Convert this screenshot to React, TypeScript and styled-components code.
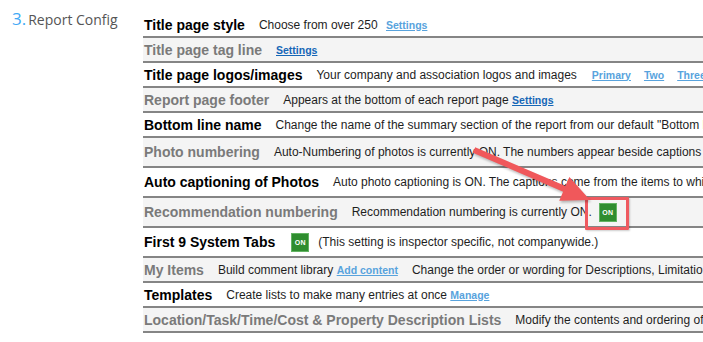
import React from 'react';
import styled, { createGlobalStyle } from 'styled-components';

const GlobalStyle = createGlobalStyle`
  html, body {
    margin: 0;
    padding: 0;
    background: #ffffff;
  }
  body {
    overflow: hidden;
  }
`;

const Page = styled.div`
  position: relative;
  width: 703px;
  height: 342px;
  overflow: hidden;
  display: flex;
  background: #fff;
`;

const Side = styled.div`
  width: 143px;
  flex-shrink: 0;
  padding: 7px 0 0 12px;
  box-sizing: border-box;
  font-family: 'Open Sans', 'Liberation Sans', sans-serif;
  white-space: nowrap;
`;

const StepNo = styled.span`
  color: #3fa9f5;
  font-size: 17px;
  margin-right: 2px;
`;

const StepName = styled.span`
  color: #555;
  font-size: 14px;
`;

const Table = styled.div`
  margin-top: 13px;
  flex: 1;
  min-width: 900px;
`;

const Row = styled.div<{ $shade?: boolean; $tall?: boolean }>`
  display: flex;
  align-items: center;
  gap: 14px;
  height: ${(p) => (p.$tall ? 28 : 23)}px;
  padding-left: 1px;
  border-bottom: 2px solid #858585;
  background: ${(p) => (p.$shade ? '#f4f4f4' : '#ffffff')};
  font-family: 'Liberation Sans', Arial, sans-serif;
  white-space: nowrap;
`;

const Label = styled.span<{ $shade?: boolean }>`
  font-size: 14px;
  font-weight: bold;
  color: ${(p) => (p.$shade ? '#7a7a7a' : '#000')};
`;

const Desc = styled.span`
  font-size: 12px;
  color: #1e1e1e;
`;

const Link = styled.a<{ $dark?: boolean; $gap?: number }>`
  font-size: 10.5px;
  font-weight: bold;
  text-decoration: underline;
  color: ${(p) => (p.$dark ? '#1667b7' : '#58a3dd')};
  margin-left: ${(p) => p.$gap ?? 0}px;
  cursor: pointer;
`;

const Links = styled.span`
  display: inline-flex;
  gap: 13px;
  margin-left: 1px;
`;

const Badge = styled.span<{ $marked?: boolean; $gap?: number }>`
  position: relative;
  display: inline-flex;
  align-items: center;
  justify-content: center;
  width: 18px;
  height: 19px;
  box-sizing: border-box;
  margin-left: ${(p) => p.$gap ?? 0}px;
  vertical-align: middle;
  background: #2f8d2f;
  border: 1px solid #63b463;
  color: #fff;
  font-family: 'Liberation Sans', Arial, sans-serif;
  font-size: 7px;
  font-weight: bold;
  letter-spacing: 0.3px;

  ${(p) =>
    p.$marked &&
    `
    &::after {
      content: '';
      position: absolute;
      top: -7px;
      left: -15px;
      right: -13px;
      bottom: -9px;
      border: 3px solid #ef5a60;
      border-radius: 1px;
      box-shadow: 1px 1px 2px rgba(0, 0, 0, 0.2);
    }
  `}
`;

const Arrow = styled.svg`
  position: absolute;
  left: 0;
  top: 0;
  pointer-events: none;
  filter: drop-shadow(1px 2px 1px rgba(0, 0, 0, 0.25));
`;

type Item = {
  label: string;
  tall?: boolean;
  body: React.ReactNode;
};

const items: Item[] = [
  {
    label: 'Title page style',
    body: (
      <Desc>
        Choose from over 250 <Link $gap={5}>Settings</Link>
      </Desc>
    ),
  },
  {
    label: 'Title page tag line',
    body: <Link $dark>Settings</Link>,
  },
  {
    label: 'Title page logos/images',
    body: (
      <>
        <Desc>Your company and association logos and images</Desc>
        <Links>
          <Link>Primary</Link>
          <Link>Two</Link>
          <Link>Three</Link>
        </Links>
      </>
    ),
  },
  {
    label: 'Report page footer',
    body: (
      <Desc>
        Appears at the bottom of each report page <Link $dark>Settings</Link>
      </Desc>
    ),
  },
  {
    label: 'Bottom line name',
    body: (
      <Desc>
        Change the name of the summary section of the report from our default "Bottom line" to whatever you like
      </Desc>
    ),
  },
  {
    label: 'Photo numbering',
    tall: true,
    body: (
      <Desc>
        Auto-Numbering of photos is currently ON. The numbers appear beside captions in the report
      </Desc>
    ),
  },
  {
    label: 'Auto captioning of Photos',
    tall: true,
    body: (
      <Desc>
        Auto photo captioning is ON. The captions come from the items to which the photos are attached
      </Desc>
    ),
  },
  {
    label: 'Recommendation numbering',
    tall: true,
    body: (
      <Desc>
        Recommendation numbering is currently ON.
        <Badge $marked $gap={7}>ON</Badge>
      </Desc>
    ),
  },
  {
    label: 'First 9 System Tabs',
    tall: true,
    body: (
      <>
        <Badge $gap={2}>ON</Badge>
        <Desc style={{ marginLeft: -5 }}>(This setting is inspector specific, not companywide.)</Desc>
      </>
    ),
  },
  {
    label: 'My Items',
    body: (
      <>
        <Desc>
          Build comment library <Link>Add content</Link>
        </Desc>
        <Desc>Change the order or wording for Descriptions, Limitations and Recommendations</Desc>
      </>
    ),
  },
  {
    label: 'Templates',
    body: (
      <Desc>
        Create lists to make many entries at once <Link>Manage</Link>
      </Desc>
    ),
  },
  {
    label: 'Location/Task/Time/Cost & Property Description Lists',
    body: <Desc>Modify the contents and ordering of the lists</Desc>,
  },
];

export default function App() {
  return (
    <>
      <GlobalStyle />
      <Page>
        <Side>
          <StepNo>3.</StepNo>
          <StepName>Report Config</StepName>
        </Side>
        <Table>
          {items.map((item, i) => {
            const shade = i % 2 === 1;
            return (
              <Row key={item.label} $shade={shade} $tall={item.tall}>
                <Label $shade={shade}>{item.label}</Label>
                {item.body}
              </Row>
            );
          })}
        </Table>
        <Arrow width="703" height="342" viewBox="0 0 703 342">
          <polygon
            points="475.2,147.2 565.5,186.1 569.4,177 590,200 559.2,200.8 563.1,191.7 472.8,152.8"
            fill="#f0585b"
          />
        </Arrow>
      </Page>
    </>
  );
}
